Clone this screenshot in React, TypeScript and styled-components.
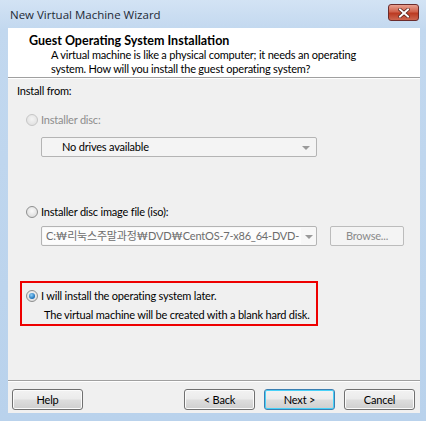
import React from "react";
import styled, { createGlobalStyle, css } from "styled-components";

const GlobalStyle = createGlobalStyle`
  html, body {
    margin: 0;
    padding: 0;
    background: #bcd4ec;
  }
  body {
    font-family: "Lato", "Noto Sans CJK KR", sans-serif;
    font-size: 11px;
    letter-spacing: -0.2px;
    color: #000;
  }
`;

const Window = styled.div`
  width: 426px;
  height: 421px;
  box-sizing: border-box;
  display: flex;
  flex-direction: column;
  background: linear-gradient(180deg, #d3e3f4 0%, #c2d8ef 30px, #b9d2ec 100%);
  padding: 0 6px 8px 8px;
`;

const TitleBar = styled.div`
  height: 28px;
  display: flex;
  align-items: center;
  justify-content: space-between;
  padding-left: 2px;
`;

const Title = styled.span`
  font-family: "Open Sans", sans-serif;
  font-size: 11.5px;
  letter-spacing: 0;
  color: #1e2a36;
  margin-top: 1px;
`;

const CloseButton = styled.div`
  width: 31px;
  height: 17px;
  margin-top: -3px;
  margin-right: 1px;
  box-sizing: border-box;
  border: 1px solid #6b2b2b;
  border-radius: 3px;
  background: linear-gradient(180deg, #e8a090 0%, #d0624c 45%, #bb3a22 55%, #cc6650 100%);
  display: flex;
  align-items: center;
  justify-content: center;
`;

const Client = styled.div`
  flex: 1;
  display: flex;
  flex-direction: column;
  background: #f0f0f0;
`;

const Header = styled.div`
  height: 50px;
  background: #fff;
  border-bottom: 1px solid #a0a0a0;
  box-shadow: 0 1px 0 #fff;
  padding: 6px 0 0 21px;
  box-sizing: border-box;
  line-height: 14px;
`;

const HeaderTitle = styled.div`
  font-weight: 700;
  font-size: 12.5px;
  letter-spacing: 0;
`;

const HeaderText = styled.div`
  padding-left: 22px;
  color: #000;
`;

const Body = styled.div`
  flex: 1;
  padding: 6px 0 0 9px;
  line-height: 14px;
`;

const Label = styled.div`
  height: 14px;
`;

const OptionRow = styled.label<{ $gap: number; $disabled?: boolean }>`
  display: flex;
  align-items: center;
  height: 16px;
  margin-top: ${(p) => p.$gap}px;
  padding-left: 9px;
  color: ${(p) => (p.$disabled ? "#8d8d8d" : "#000")};
`;

const Radio = styled.span<{ $checked?: boolean; $disabled?: boolean }>`
  width: 12px;
  height: 12px;
  box-sizing: border-box;
  border-radius: 50%;
  border: 1px solid ${(p) => (p.$disabled ? "#c6c6c6" : "#8e8f8f")};
  background: ${(p) =>
    p.$disabled
      ? "radial-gradient(circle at 50% 40%, #f4f4f4, #dcdcdc)"
      : "radial-gradient(circle at 50% 40%, #fafafa, #d5d5d5)"};
  margin-right: 3px;
  display: flex;
  align-items: center;
  justify-content: center;
  ${(p) =>
    p.$checked &&
    css`
      &::after {
        content: "";
        width: 6px;
        height: 6px;
        border-radius: 50%;
        background: radial-gradient(circle at 40% 35%, #8fd0f8, #1a6fb8 70%, #0e4f91);
      }
    `}
`;

const FieldRow = styled.div<{ $gap: number }>`
  display: flex;
  align-items: center;
  margin-top: ${(p) => p.$gap}px;
  margin-left: 24px;
`;

const Combo = styled.div<{ $light?: boolean }>`
  width: 276px;
  height: 20px;
  box-sizing: border-box;
  border: 1px solid #b4b4b4;
  border-radius: 2px;
  background: ${(p) => (p.$light ? "#f7f7f7" : "#f4f4f4")};
  display: flex;
  align-items: center;
  justify-content: space-between;
`;

const ComboText = styled.span<{ $muted?: boolean; $indent: number }>`
  padding-left: ${(p) => p.$indent}px;
  white-space: nowrap;
  color: ${(p) => (p.$muted ? "#6d6d6d" : "#000")};
  ${(p) =>
    p.$muted &&
    css`
      background: #fcfcfc;
      padding-right: 2px;
      height: 16px;
      line-height: 16px;
      margin-left: 1px;
    `}
`;

const Arrow = styled.span`
  width: 0;
  height: 0;
  border-left: 4px solid transparent;
  border-right: 4px solid transparent;
  border-top: 4px solid #9a9a9a;
  margin: 1px 6px 0 4px;
`;

const BrowseButton = styled.div`
  width: 74px;
  height: 20px;
  margin-left: 13px;
  box-sizing: border-box;
  border: 1px solid #bcbcbc;
  border-radius: 2px;
  background: #f4f4f4;
  color: #8a8a8a;
  display: flex;
  align-items: center;
  justify-content: center;
`;

const Highlight = styled.div`
  margin: 35px 0 0 3px;
  width: 298px;
  height: 45px;
  box-sizing: border-box;
  border: 2px solid #ee0000;
  padding-top: 5px;
`;

const HighlightRow = styled(OptionRow)`
  padding-left: 4px;
`;

const Note = styled.div`
  padding-left: 22px;
  margin-top: 4px;
  color: #000;
  white-space: nowrap;
`;

const Footer = styled.div`
  height: 33px;
  border-top: 1px solid #a0a0a0;
  box-shadow: inset 0 1px 0 #fff;
  display: flex;
  align-items: flex-start;
  padding: 8px 0 0 4px;
  box-sizing: border-box;
`;

const Button = styled.div<{ $default?: boolean; $gap: number }>`
  width: 71px;
  height: 21px;
  margin-left: ${(p) => p.$gap}px;
  box-sizing: border-box;
  border: 1px solid ${(p) => (p.$default ? "#3c7fb1" : "#707070")};
  border-radius: 3px;
  background: linear-gradient(180deg, #f2f2f2 0%, #ebebeb 48%, #dddddd 52%, #cfcfcf 100%);
  box-shadow: inset 0 0 0 1px ${(p) => (p.$default ? "#48d1f8" : "#fbfbfb")};
  display: flex;
  align-items: center;
  justify-content: center;
  color: #000;
`;

export default function App() {
  return (
    <>
      <GlobalStyle />
      <Window>
        <TitleBar>
          <Title>New Virtual Machine Wizard</Title>
          <CloseButton>
            <svg width="12" height="10" viewBox="0 0 12 10">
              <path d="M2 1.5 L10 8.5 M10 1.5 L2 8.5" stroke="#4a1a14" strokeWidth="3.4" strokeLinecap="square" />
              <path d="M2 1.5 L10 8.5 M10 1.5 L2 8.5" stroke="#ffffff" strokeWidth="2" strokeLinecap="square" />
            </svg>
          </CloseButton>
        </TitleBar>
        <Client>
          <Header>
            <HeaderTitle>Guest Operating System Installation</HeaderTitle>
            <HeaderText>
              A virtual machine is like a physical computer; it needs an operating
              <br />
              system. How will you install the guest operating system?
            </HeaderText>
          </Header>
          <Body>
            <Label>Install from:</Label>
            <OptionRow $gap={14} $disabled>
              <Radio $disabled />
              Installer disc:
            </OptionRow>
            <FieldRow $gap={9}>
              <Combo>
                <ComboText $indent={20}>No drives available</ComboText>
                <Arrow />
              </Combo>
            </FieldRow>
            <OptionRow $gap={47}>
              <Radio />
              Installer disc image file (iso):
            </OptionRow>
            <FieldRow $gap={6}>
              <Combo $light>
                <ComboText $muted $indent={3}>
                  C:₩리눅스주말과정₩DVD₩CentOS-7-x86_64-DVD-
                </ComboText>
                <Arrow />
              </Combo>
              <BrowseButton>Browse...</BrowseButton>
            </FieldRow>
            <Highlight>
              <HighlightRow $gap={0}>
                <Radio $checked />
                I will install the operating system later.
              </HighlightRow>
              <Note>The virtual machine will be created with a blank hard disk.</Note>
            </Highlight>
          </Body>
          <Footer>
            <Button $gap={0}>Help</Button>
            <Button $gap={101}>&lt; Back</Button>
            <Button $gap={9} $default>
              Next &gt;
            </Button>
            <Button $gap={9}>Cancel</Button>
          </Footer>
        </Client>
      </Window>
    </>
  );
}
